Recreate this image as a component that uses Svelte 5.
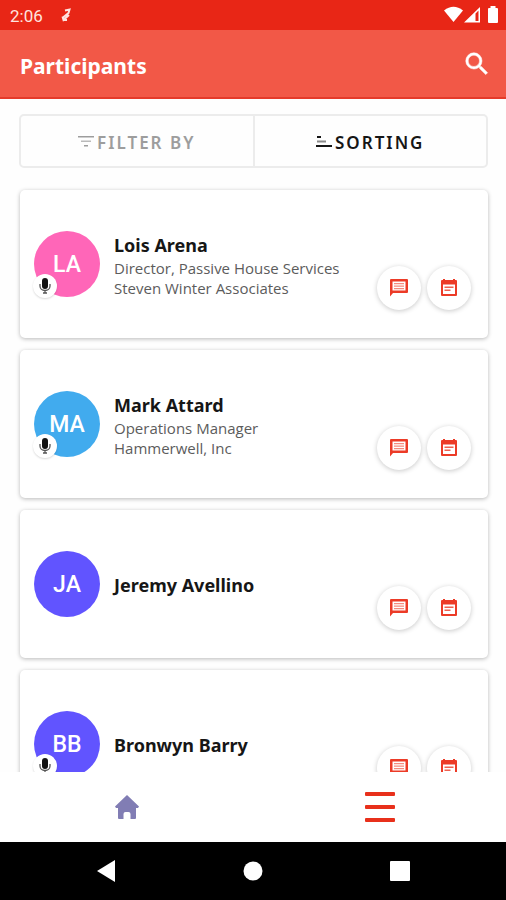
<script lang="ts">
  type Participant = {
    name: string;
    initials: string;
    color: string;
    role?: string;
    company?: string;
    speaker: boolean;
  };

  const participants: Participant[] = [
    { name: "Lois Arena", initials: "LA", color: "#ff66b8", role: "Director, Passive House Services", company: "Steven Winter Associates", speaker: true },
    { name: "Mark Attard", initials: "MA", color: "#41abee", role: "Operations Manager", company: "Hammerwell, Inc", speaker: true },
    { name: "Jeremy Avellino", initials: "JA", color: "#6154ff", speaker: false },
    { name: "Bronwyn Barry", initials: "BB", color: "#6154ff", speaker: true },
  ];
</script>

<div class="screen">
  <div class="status-bar">
    <span class="clock">2:06</span>
    <svg class="notice" width="10" height="14" viewBox="0 0 10 14" fill="none" stroke="#ffe3df" stroke-width="2">
      <path d="M4 2.500 8.500 1.500 7.500 5 2 9.500M8 7 2.500 12 1.500 8.500M2.500 12 6 12" />
    </svg>
    <svg width="54" height="18" viewBox="0 0 54 18" fill="#fff">
      <path d="M0 4.500 Q9.500 -3 19 4.500 L9.500 16 Z" />
      <path fill-rule="evenodd" d="M20 16.500 L36 1 V16.500 Z M31.500 7.500 V15 H34.500 V4.500 Z" />
      <path d="M46.500 0 H51.500 V2 H53 Q54 2 54 3 V16 Q54 17 53 17 H45 Q44 17 44 16 V3 Q44 2 45 2 H46.500 Z" />
    </svg>
  </div>

  <header class="app-bar">
    <h1>Participants</h1>
    <button type="button" class="search" aria-label="Search">
      <svg width="30" height="30" viewBox="0 0 24 24" fill="#fff" stroke="#fff" stroke-width="0.400">
        <path d="M15.500 14h-.790l-.280-.270A6.471 6.471 0 0 0 16 9.500 6.500 6.500 0 1 0 9.500 16c1.610 0 3.090-.590 4.230-1.570l.270.280v.790l5 4.990L20.490 19l-4.990-5zm-6 0C7.010 14 5 11.990 5 9.500S7.010 5 9.500 5 14 7.010 14 9.500 11.990 14 9.500 14z" />
      </svg>
    </button>
  </header>

  <main>
    <div class="toolbar">
      <button type="button" class="filter">
        <svg width="16" height="12" viewBox="0 0 16 12" fill="currentColor">
          <path d="M0 0h16v1.500H0zM6 9h4v1.500H6z" />
          <path opacity="0.7" d="M3 4.500h10V6H3z" />
        </svg>
        Filter by
      </button>
      <button type="button" class="sort">
        <svg width="16" height="12" viewBox="0 0 16 12" fill="currentColor">
          <path d="M1 0h4v2H1zM0 9h16v2H0z" />
          <path opacity="0.5" d="M1 4.500h9v2H1z" />
        </svg>
        Sorting
      </button>
    </div>

    <ul class="list">
      {#each participants as person (person.name)}
        <li class="card">
          <div class="avatar" style:background={person.color}>
            {person.initials}
            {#if person.speaker}
              <span class="badge">
                <svg width="12" height="16" viewBox="0 0 12 16">
                  <rect x="3" y="0" width="6" height="11" rx="3" fill="#111" />
                  <path d="M1 6v2a5 4.500 0 0 0 10 0V6M6 12v3M4 15h4" fill="none" stroke="#555" stroke-width="1.300" />
                </svg>
              </span>
            {/if}
          </div>
          <div class="info">
            <h2>{person.name}</h2>
            {#if person.role}<p>{person.role}</p>{/if}
            {#if person.company}<p>{person.company}</p>{/if}
          </div>
          <div class="actions">
            <button type="button" aria-label="Message {person.name}">
              <svg width="20" height="20" viewBox="0 0 20 20">
                <path fill="#ec3b27" fill-rule="evenodd" d="M2 1h16q1 0 1 1v12q0 1-1 1H4l-3 3.500V2q0-1 1-1zM3.500 3.500v9h13v-9z" />
                <path fill="#f58a7d" d="M5 5h10v1.300H5zM5 7.500h10v1.300H5zM5 10h10v1.300H5z" />
              </svg>
            </button>
            <button type="button" aria-label="Schedule a meeting with {person.name}">
              <svg width="20" height="20" viewBox="0 0 20 20">
                <path fill="#ec3b27" fill-rule="evenodd" d="M4 1h2v1h8V1h2v1h1q1 0 1 1v14q0 1-1 1H3q-1 0-1-1V3q0-1 1-1h1zM4 6.500v9.500h12V6.500z" />
                <path fill="#f0604f" d="M5.500 8.500h9v1.500h-9zM5.500 11.500h6V13h-6z" />
              </svg>
            </button>
          </div>
        </li>
      {/each}
    </ul>
  </main>

  <nav class="tabs">
    <button type="button" aria-label="Home">
      <svg width="24" height="24" viewBox="0 0 24 24" fill="#817db4">
        <path d="M12 0 24 11.500 23 13h-2v10q0 1-1 1h-4.500v-5q0-2-2-2h-3q-2 0-2 2v5H4q-1 0-1-1V13H1l-1-1.500z" />
      </svg>
    </button>
    <button type="button" aria-label="Menu">
      <svg width="30" height="30" viewBox="0 0 30 30" fill="#e8301b">
        <rect y="0" width="30" height="4" rx="1" />
        <rect y="13" width="30" height="4" rx="1" />
        <rect y="26" width="30" height="4" rx="1" />
      </svg>
    </button>
  </nav>

  <nav class="system-nav">
    <button type="button" aria-label="Back">
      <svg width="18" height="22" viewBox="0 0 18 22" fill="#fff"><path d="M18 0v22L0 11z" /></svg>
    </button>
    <button type="button" aria-label="Home screen">
      <svg width="20" height="20" viewBox="0 0 20 20" fill="#fff"><circle cx="10" cy="10" r="9.500" /></svg>
    </button>
    <button type="button" aria-label="Recent apps">
      <svg width="20" height="20" viewBox="0 0 20 20" fill="#fff"><rect width="20" height="20" rx="1" /></svg>
    </button>
  </nav>
</div>

<style>
  :global(body) {
    margin: 0;
  }
  .screen {
    display: flex;
    flex-direction: column;
    height: 100vh;
    overflow: hidden;
    background: #fefefe;
    color: #161616;
    font-family: "Noto Sans", "Open Sans", sans-serif;
  }
  button {
    display: flex;
    align-items: center;
    justify-content: center;
    padding: 0;
    border: none;
    background: none;
    color: inherit;
    font: inherit;
    cursor: pointer;
  }
  h1,
  h2,
  p,
  ul {
    margin: 0;
    padding: 0;
  }
  .status-bar {
    display: flex;
    flex: none;
    align-items: center;
    height: 30px;
    padding: 0 8px 0 10px;
    background: #e82616;
    color: #ffe3df;
    font-family: Roboto, sans-serif;
  }
  .clock {
    padding-top: 2px;
    font-size: 17px;
  }
  .notice {
    margin: 0 auto 0 18px;
  }
  .app-bar {
    display: flex;
    flex: none;
    align-items: center;
    justify-content: space-between;
    box-sizing: border-box;
    height: 69px;
    padding: 0 14px 0 20px;
    border-bottom: 2px solid #e53a2a;
    background: #f25847;
    color: #fff;
  }
  h1 {
    padding-top: 4px;
    font-size: 21px;
    font-weight: 700;
    line-height: 28px;
  }
  main {
    flex: 1;
    min-height: 0;
    padding: 15px 18px 0 19px;
    overflow: hidden;
  }
  .toolbar {
    display: flex;
    box-sizing: border-box;
    height: 54px;
    margin-bottom: 22px;
    border: 2px solid #ececec;
    border-radius: 5px;
  }
  .toolbar button {
    flex: 1;
    gap: 3px;
    padding-top: 2px;
    font-size: 17px;
    font-weight: 600;
    letter-spacing: 2px;
    text-transform: uppercase;
  }
  .toolbar .filter {
    border-right: 2px solid #ececec;
    color: #9d9d9d;
  }
  .list {
    display: flex;
    flex-direction: column;
    gap: 12px;
    padding: 0 0 0 1px;
    list-style: none;
  }
  .card {
    display: flex;
    align-items: center;
    gap: 14px;
    box-sizing: border-box;
    height: 148px;
    padding: 0 17px 0 14px;
    border-radius: 5px;
    background: #fff;
    box-shadow: 0 1px 4px rgba(0, 0, 0, 0.28);
  }
  .avatar {
    position: relative;
    display: flex;
    flex: none;
    align-items: center;
    justify-content: center;
    width: 66px;
    height: 66px;
    border-radius: 50%;
    color: #fff;
    font-family: Roboto, sans-serif;
    font-size: 23px;
    font-weight: 500;
  }
  .badge {
    position: absolute;
    bottom: -1px;
    left: -1px;
    display: flex;
    align-items: center;
    justify-content: center;
    width: 24px;
    height: 24px;
    border-radius: 50%;
    background: #fff;
    box-shadow: 0 1px 2px rgba(0, 0, 0, 0.15);
  }
  .info {
    flex: 1;
    min-width: 0;
    padding-top: 2px;
    white-space: nowrap;
  }
  h2 {
    font-size: 18px;
    font-weight: 700;
    line-height: 26px;
  }
  p {
    color: #5c5c5c;
    font-family: "Open Sans", sans-serif;
    font-size: 15px;
    line-height: 20px;
  }
  .actions {
    display: flex;
    flex: none;
    align-self: flex-end;
    gap: 6px;
    padding-bottom: 28px;
  }
  .actions button {
    width: 44px;
    height: 44px;
    border-radius: 50%;
    background: #fff;
    box-shadow: 0 1px 5px rgba(0, 0, 0, 0.22);
  }
  .tabs {
    display: flex;
    flex: none;
    height: 70px;
    background: #fff;
  }
  .tabs button,
  .system-nav button {
    flex: 1;
  }
  .system-nav {
    display: flex;
    flex: none;
    height: 58px;
    padding: 0 32px;
    background: #000;
  }
</style>
